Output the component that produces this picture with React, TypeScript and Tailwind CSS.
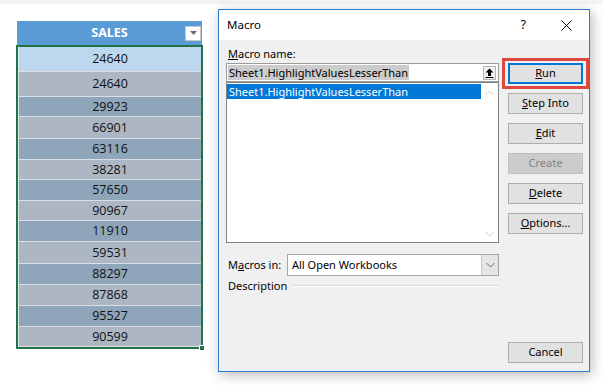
import React from "react";

const rows = [
  { v: "24640", cls: "h-[25px] bg-[#bdd7ee]" },
  { v: "24640", cls: "h-[25px] bg-[#acb7c3]" },
  { v: "29923", cls: "h-[20px] bg-[#8fa5ba]" },
  { v: "66901", cls: "h-[22px] bg-[#acb7c3]" },
  { v: "63116", cls: "h-[21px] bg-[#8fa5ba]" },
  { v: "38281", cls: "h-[20px] bg-[#acb7c3]" },
  { v: "57650", cls: "h-[21px] bg-[#8fa5ba]" },
  { v: "90967", cls: "h-[20px] bg-[#acb7c3]" },
  { v: "11910", cls: "h-[21px] bg-[#8fa5ba]" },
  { v: "59531", cls: "h-[22px] bg-[#acb7c3]" },
  { v: "88297", cls: "h-[21px] bg-[#8fa5ba]" },
  { v: "87868", cls: "h-[21px] bg-[#acb7c3]" },
  { v: "95527", cls: "h-[21px] bg-[#8fa5ba]" },
  { v: "90599", cls: "h-[20px] bg-[#acb7c3]" },
];

function SalesColumn() {
  return (
    <div className="mt-[17px] flex w-[187px] flex-col font-['Open_Sans',sans-serif]">
      <div className="ml-[1px] grid h-[24px] w-[185px] grid-cols-[17px_1fr_17px] items-center bg-[#5b9bd5]">
        <span />
        <span className="text-center text-[12.5px] font-bold text-white">SALES</span>
        <span className="flex h-[15px] w-[16px] items-center justify-center border border-[#c9c9c9] bg-white">
          <svg width="7" height="4" viewBox="0 0 7 4">
            <path d="M0 0h7L3.5 4z" fill="#6b6b6b" />
          </svg>
        </span>
      </div>
      <div className="relative h-[304px] w-[187px] border-2 border-[#217346] bg-[#e4e9ee] pl-[1px]">
        {rows.map((r, i) => (
          <div
            key={i}
            className={`flex items-center justify-center border-b border-[#d9dfe5] pt-[1px] text-[12.5px] text-[#111] ${r.cls}`}
          >
            {r.v}
          </div>
        ))}
        <span className="absolute -right-[4px] -bottom-[4px] h-[6px] w-[6px] border border-white bg-[#217346]" />
      </div>
    </div>
  );
}

function Btn({
  children,
  main,
  disabled,
}: {
  children: React.ReactNode;
  main?: boolean;
  disabled?: boolean;
}) {
  return (
    <div
      className={`flex h-[21px] w-[75px] items-center justify-center text-[11px] ${
        main
          ? "border-2 border-[#0078d7] bg-[#e1e1e1] text-black"
          : disabled
            ? "border border-[#bfbfbf] bg-[#cccccc] text-[#838383]"
            : "border border-[#adadad] bg-[#e1e1e1] text-black"
      }`}
    >
      {children}
    </div>
  );
}

function Chevron({ up, color }: { up?: boolean; color: string }) {
  return (
    <svg width="9" height="6" viewBox="0 0 9 6">
      <path
        d={up ? "M0.5 5L4.5 1L8.5 5" : "M0.5 1L4.5 5L8.5 1"}
        fill="none"
        stroke={color}
        strokeWidth="1"
      />
    </svg>
  );
}

function MacroDialog() {
  return (
    <div className="mt-[5px] ml-[15px] flex h-[363px] w-[372px] flex-col border border-[#2b7dcb] bg-[#f0f0f0] font-['Noto_Sans',sans-serif] text-black shadow-[2px_3px_12px_rgba(0,0,0,0.28)]">
      <div className="flex h-[30px] items-center bg-white pl-[8px]">
        <span className="text-[11.5px]">Macro</span>
        <span className="ml-auto mr-[35px] text-[12px]">?</span>
        <svg width="11" height="11" viewBox="0 0 11 11" className="mr-[17px]">
          <path d="M0.5 0.5L10.5 10.5M10.5 0.5L0.5 10.5" stroke="#000" strokeWidth="1" />
        </svg>
      </div>
      <div className="flex flex-1 flex-row pl-[7px] pr-[6px]">
        <div className="flex w-[273px] flex-col pt-[6px] text-[11px]">
          <div className="h-[16px] pl-[2px] leading-[16px]">
            <span className="underline">M</span>acro name:
          </div>
          <div className="mt-[1px] flex h-[19px] items-center border border-[#9b9b9b] bg-white pl-[1px] pr-[2px]">
            <span className="bg-[#cccccc] px-[1px] leading-[15px]">Sheet1.HighlightValuesLesserThan</span>
            <span className="ml-auto flex h-[14px] w-[13px] items-center justify-center border border-[#b5b5b5] bg-[#f0f0f0]">
              <svg width="9" height="10" viewBox="0 0 9 10">
                <path d="M4.5 0.5L8.5 4.5H6V8H3V4.5H0.5z" fill="#000" />
                <path d="M0.5 9.5H8.5" stroke="#000" strokeWidth="1" />
              </svg>
            </span>
          </div>
          <div className="flex h-[161px] border border-[#828282] bg-white">
            <div className="flex-1 pt-[1px]">
              <div className="h-[15px] bg-[#0078d7] pl-[2px] leading-[15px] text-white">
                Sheet1.HighlightValuesLesserThan
              </div>
            </div>
            <div className="flex w-[17px] flex-col items-center justify-between pt-[7px] pb-[5px]">
              <Chevron up color="#c8c8c8" />
              <Chevron color="#c8c8c8" />
            </div>
          </div>
          <div className="mt-[11px] flex h-[22px] items-center">
            <span className="w-[61px] pl-[2px]">
              M<span className="underline">a</span>cros in:
            </span>
            <div className="flex h-[22px] flex-1 items-center border border-[#a6a6a6] bg-white">
              <span className="pl-[4px]">All Open Workbooks</span>
              <span className="ml-auto flex h-full w-[17px] items-center justify-center border-l border-[#c6c6c6] bg-[#e5e5e5]">
                <Chevron color="#6e6e6e" />
              </span>
            </div>
          </div>
          <div className="mt-[2px] flex h-[16px] items-center">
            <span className="pl-[2px] leading-[16px]">Description</span>
            <span className="ml-[5px] h-[2px] flex-1 border-t border-b border-t-[#d8d8d8] border-b-white" />
          </div>
        </div>
        <div className="ml-[9px] flex w-[75px] flex-col gap-[9px] pt-[23px] pb-[8px]">
          <div className="relative">
            <Btn main>
              <span className="underline">R</span>un
            </Btn>
            <span className="absolute -top-[5px] -right-[6px] -bottom-[5px] -left-[6px] border-[3px] border-[#e0473f]" />
          </div>
          <Btn>
            <span className="underline">S</span>tep Into
          </Btn>
          <Btn>
            <span className="underline">E</span>dit
          </Btn>
          <Btn disabled>Create</Btn>
          <Btn>
            <span className="underline">D</span>elete
          </Btn>
          <Btn>
            <span className="underline">O</span>ptions...
          </Btn>
          <div className="mt-auto">
            <Btn>Cancel</Btn>
          </div>
        </div>
      </div>
    </div>
  );
}

export default function App() {
  return (
    <div className="flex h-[385px] w-[603px] flex-col overflow-hidden bg-white">
      <div className="h-[4px] bg-[#f3f3f3]" />
      <div className="flex flex-row pl-[16px]">
        <SalesColumn />
        <MacroDialog />
      </div>
    </div>
  );
}
